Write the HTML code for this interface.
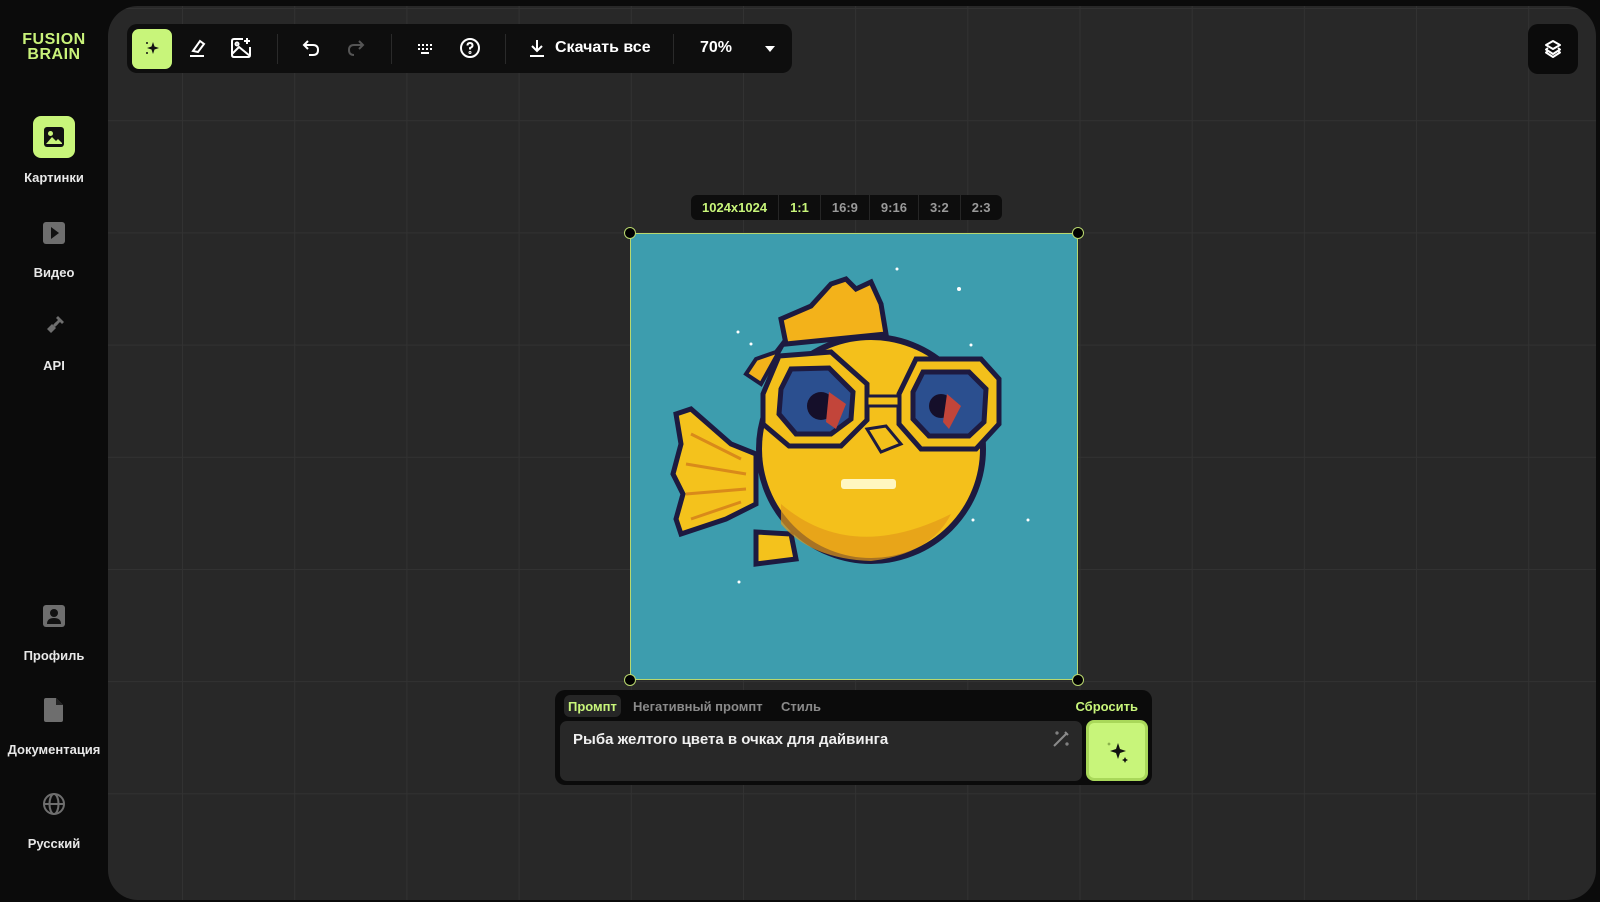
<!DOCTYPE html>
<html><head><meta charset="utf-8"><style>
*{margin:0;padding:0;box-sizing:border-box}
body{width:1600px;height:902px;background:#0b0b0b;overflow:hidden;position:relative;font-family:"Liberation Sans","DejaVu Sans",sans-serif;color:#fff}
.abs{position:absolute}
#panel{left:108px;top:6px;width:1488px;height:894px;border-radius:30px;background-color:#282828;
background-image:linear-gradient(to right,#323232 1px,transparent 1px),linear-gradient(to bottom,#323232 1px,transparent 1px);
background-size:112.2px 112.2px;background-position:74px 2px;overflow:hidden}
.logo{left:0;width:108px;top:32px;text-align:center;color:#c9f27a;font-weight:bold;font-size:16px;line-height:15px;letter-spacing:.5px}
.nav{left:0;width:108px;text-align:center;font-size:13px;font-weight:bold;color:#e8e8e8}
.tb{left:127px;top:24px;width:665px;height:49px;background:#0e0e0e;border-radius:10px}
.sep{position:absolute;top:10px;width:1px;height:30px;background:#2a2a2a}
.ic{position:absolute;top:12px}
.badge{left:691px;top:195px;height:25px;background:#0d0d0d;border-radius:6px;display:flex;font-size:13px;font-weight:bold;color:#9a9a9a}
.badge span{padding:0 11px;line-height:25px;border-left:1px solid #262626}
.badge span:first-child{border:none}
.h{width:12px;height:12px;border-radius:50%;background:#000;border:1.5px solid #b9d86e;position:absolute}
</style></head><body>
<div class="abs logo">FUSION<br>BRAIN</div>

<div class="abs" style="left:33px;top:116px;width:42px;height:42px;background:#c8f57a;border-radius:8px"></div>
<svg class="abs" style="left:42px;top:125px" width="24" height="24" viewBox="0 0 24 24"><rect x="2" y="2" width="20" height="20" rx="3" fill="#111"/><circle cx="8.5" cy="8.5" r="2.5" fill="#c8f57a"/><path d="M4 19 L10 12 L14 16 L16 14 L20 18 V19Z" fill="#c8f57a"/></svg>
<div class="abs nav" style="top:170px">Картинки</div>
<svg class="abs" style="left:42px;top:221px" width="24" height="24" viewBox="0 0 24 24"><rect x="1" y="1" width="22" height="22" rx="3" fill="#6e6e6e"/><path d="M9 6 L17 12 L9 18Z" fill="#111"/></svg>
<div class="abs nav" style="top:265px">Видео</div>
<svg class="abs" style="left:41px;top:313px" width="26" height="26" viewBox="0 0 26 26" fill="#6e6e6e"><path d="M3 23 L8 18 L6 16 L11 11 L15 15 L10 20 L8 18Z"/><path d="M13 11 L17 7 L15 5 L17 3 L23 9 L21 11 L19 9 L15 13Z"/><path d="M12 12 L15 9 L17 11 L14 14Z"/></svg>
<div class="abs nav" style="top:358px">API</div>

<svg class="abs" style="left:42px;top:604px" width="24" height="24" viewBox="0 0 24 24"><rect x="1" y="1" width="22" height="22" rx="3" fill="#6e6e6e"/><circle cx="12" cy="9" r="4" fill="#111"/><path d="M5 20 Q5 14 12 14 Q19 14 19 20Z" fill="#111"/></svg>
<div class="abs nav" style="top:648px">Профиль</div>
<svg class="abs" style="left:43px;top:697px" width="22" height="26" viewBox="0 0 22 26"><path d="M3 1 H13 L20 8 V23 Q20 25 18 25 H3 Q1 25 1 23 V3 Q1 1 3 1Z" fill="#6e6e6e"/><path d="M13 1 V8 H20" fill="#222"/></svg>
<div class="abs nav" style="top:742px">Документация</div>
<svg class="abs" style="left:42px;top:792px" width="24" height="24" viewBox="0 0 24 24" fill="none" stroke="#6e6e6e" stroke-width="2"><circle cx="12" cy="12" r="10"/><ellipse cx="12" cy="12" rx="4.5" ry="10"/><path d="M2 12 H22"/></svg>
<div class="abs nav" style="top:836px">Русский</div>

<div id="panel" class="abs"></div>

<div class="abs tb">
  <div class="abs" style="left:5px;top:5px;width:40px;height:40px;background:#c8f57a;border-radius:7px"></div>
  <svg class="ic" style="left:13px" width="24" height="24" viewBox="0 0 24 24"><path d="M13 6 L14.5 10.5 L19 12 L14.5 13.5 L13 18 L11.5 13.5 L7 12 L11.5 10.5Z" fill="#111"/><circle cx="7" cy="7" r="1" fill="#111"/><circle cx="7" cy="17" r="1" fill="#111"/></svg>
  <svg class="ic" style="left:58px" width="24" height="24" viewBox="0 0 24 24" fill="none" stroke="#fff" stroke-width="2"><path d="M8 15 L15 5 L19 8 L13 16 Z"/><path d="M5 20 H19"/></svg>
  <svg class="ic" style="left:102px" width="24" height="24" viewBox="0 0 24 24" fill="none" stroke="#fff" stroke-width="2"><path d="M14 3 H5 Q3 3 3 5 V19 Q3 21 5 21 H19 Q21 21 21 19 V11"/><path d="M3 18 L10 11 L21 20"/><circle cx="8" cy="8" r="1.5"/><path d="M18 2 V8 M15 5 H21"/></svg>
  <div class="sep" style="left:150px"></div>
  <svg class="ic" style="left:172px" width="24" height="24" viewBox="0 0 24 24" fill="none" stroke="#fff" stroke-width="2"><path d="M9 5 L5 9 L9 13"/><path d="M5 9 H14 Q19 9 19 14 Q19 19 14 19 H10"/></svg>
  <svg class="ic" style="left:217px" width="24" height="24" viewBox="0 0 24 24" fill="none" stroke="#555" stroke-width="2"><path d="M15 5 L19 9 L15 13"/><path d="M19 9 H10 Q5 9 5 14 Q5 19 10 19"/></svg>
  <div class="sep" style="left:264px"></div>
  <svg class="ic" style="left:286px" width="24" height="24" viewBox="0 0 24 24" fill="#fff"><rect x="5" y="8" width="2" height="2"/><rect x="9" y="8" width="2" height="2"/><rect x="13" y="8" width="2" height="2"/><rect x="17" y="8" width="2" height="2"/><rect x="5" y="12" width="2" height="2"/><rect x="9" y="12" width="2" height="2"/><rect x="13" y="12" width="2" height="2"/><rect x="17" y="12" width="2" height="2"/><rect x="8" y="16" width="8" height="2"/></svg>
  <svg class="ic" style="left:331px" width="24" height="24" viewBox="0 0 24 24" fill="none" stroke="#fff" stroke-width="2"><circle cx="12" cy="12" r="9"/><path d="M9.5 9.5 Q9.5 7 12 7 Q14.5 7 14.5 9.5 Q14.5 11 12 12 V13.5"/><circle cx="12" cy="16.5" r=".5"/></svg>
  <div class="sep" style="left:378px"></div>
  <svg class="ic" style="left:399px" width="22" height="24" viewBox="0 0 22 24" fill="none" stroke="#fff" stroke-width="2"><path d="M11 4 V15 M6 10 L11 15 L16 10 M4 20 H18"/></svg>
  <div class="abs" style="left:428px;top:15px;font-size:16px;font-weight:bold">Скачать все</div>
  <div class="sep" style="left:546px"></div>
  <div class="abs" style="left:573px;top:15px;font-size:16px;font-weight:bold">70%</div>
  <div class="abs" style="left:638px;top:22px;width:0;height:0;border-left:5px solid transparent;border-right:5px solid transparent;border-top:6px solid #fff"></div>
</div>

<div class="abs" style="left:1528px;top:24px;width:50px;height:50px;background:#0b0b0b;border-radius:10px"></div>
<svg class="abs" style="left:1541px;top:37px" width="24" height="24" viewBox="0 0 24 24" fill="none" stroke="#fff" stroke-width="2" stroke-linejoin="round"><path d="M12 4 L19 8 L12 12 L5 8Z"/><path d="M7 11 L5 12.5 L12 17 L19 12.5 L17 11"/><path d="M7 15 L5 16.5 L12 21 L19 16.5 L17 15" transform="translate(0,-1)"/></svg>

<div class="abs badge"><span style="color:#c8f57a">1024x1024</span><span style="color:#c8f57a">1:1</span><span>16:9</span><span>9:16</span><span>3:2</span><span>2:3</span></div>

<div class="abs" style="left:630px;top:233px;width:448px;height:447px;background:#3d9dae;border:1px solid #b9d86e">
<svg width="446" height="445" viewBox="0 0 446 445">
 <g fill="#fff"><circle cx="266" cy="35" r="1.5"/><circle cx="328" cy="55" r="2"/><circle cx="107" cy="98" r="1.5"/><circle cx="120" cy="110" r="1.5"/><circle cx="340" cy="111" r="1.5"/><circle cx="397" cy="286" r="1.5"/><circle cx="108" cy="348" r="1.5"/><circle cx="342" cy="286" r="1.5"/></g>
 <path d="M45 180 L60 175 L100 210 L125 220 L125 270 L95 285 L50 300 L45 285 L52 260 L42 240 L50 210Z" fill="#f4c21c" stroke="#1d1a40" stroke-width="5"/>
 <path d="M60 200 L110 225 M55 230 L115 240 M55 260 L115 255 M60 285 L110 268" stroke="#d98a1a" stroke-width="3"/>
 <path d="M125 298 L160 300 L165 325 L125 330Z" fill="#f4c21c" stroke="#1d1a40" stroke-width="5"/>
 <path d="M155 110 L150 85 L180 72 L200 50 L215 45 L225 55 L240 48 L250 70 L255 100Z" fill="#f3b21a" stroke="#1d1a40" stroke-width="5"/>
 <path d="M130 150 L115 140 L125 125 L145 118 L155 105Z" fill="#f3b21a" stroke="#1d1a40" stroke-width="4"/>
 <ellipse cx="240" cy="215" rx="112" ry="112" fill="#f4c01b" stroke="#1d1a40" stroke-width="6"/>
 <path d="M150 270 Q220 330 320 280 Q300 320 240 327 Q180 325 150 290Z" fill="#e39a18" opacity=".7"/>
 <rect x="210" y="245" width="55" height="10" rx="3" fill="#fff7c0"/>
 <path d="M132 160 L148 122 L200 118 L236 150 L236 186 L210 212 L158 212 L132 190Z" fill="#f3c01b" stroke="#1d1a40" stroke-width="5"/>
 <path d="M150 155 L160 135 L198 134 L222 158 L220 185 L200 200 L165 200 L148 180Z" fill="#2b4f8f" stroke="#1d1a40" stroke-width="5"/>
 <circle cx="190" cy="172" r="14" fill="#150f2a"/><path d="M198 158 L215 170 L205 195 L195 188Z" fill="#c2453a"/>
 <path d="M268 160 L285 125 L350 125 L368 145 L368 190 L345 215 L290 215 L268 190Z" fill="#f3c01b" stroke="#1d1a40" stroke-width="5"/>
 <path d="M282 158 L292 138 L338 138 L355 155 L353 188 L338 202 L298 202 L282 185Z" fill="#2b4f8f" stroke="#1d1a40" stroke-width="5"/>
 <circle cx="310" cy="172" r="12" fill="#150f2a"/><path d="M316 160 L330 172 L318 195 L312 188Z" fill="#c2453a"/>
 <rect x="236" y="162" width="32" height="10" fill="#f3c01b" stroke="#1d1a40" stroke-width="3"/>
 <path d="M236 195 L255 192 L270 210 L250 218Z" fill="#f3c01b" stroke="#1d1a40" stroke-width="3"/>
</svg>
</div>
<div class="h" style="left:624px;top:227px"></div>
<div class="h" style="left:1072px;top:227px"></div>
<div class="h" style="left:624px;top:674px"></div>
<div class="h" style="left:1072px;top:674px"></div>

<div class="abs" style="left:555px;top:690px;width:597px;height:95px;background:#0b0b0b;border-radius:10px">
  <div class="abs" style="left:9px;top:5px;width:57px;height:22px;background:#262626;border-radius:6px"></div>
  <div class="abs" style="left:13px;top:9px;font-size:13px;font-weight:bold;color:#c8f57a">Промпт</div>
  <div class="abs" style="left:78px;top:9px;font-size:13px;font-weight:bold;color:#8a8a8a">Негативный промпт</div>
  <div class="abs" style="left:226px;top:9px;font-size:13px;font-weight:bold;color:#8a8a8a">Стиль</div>
  <div class="abs" style="right:14px;top:9px;font-size:13px;font-weight:bold;color:#c8f57a">Сбросить</div>
  <div class="abs" style="left:5px;top:31px;width:522px;height:60px;background:#282828;border-radius:7px"></div>
  <div class="abs" style="left:18px;top:41px;font-size:15px;font-weight:bold;color:#f0f0f0">Рыба желтого цвета в очках для дайвинга</div>
  <svg class="abs" style="left:496px;top:39px" width="20" height="20" viewBox="0 0 20 20" fill="none" stroke="#8a8a8a" stroke-width="2"><path d="M3 17 L15 5"/><path d="M14 3 L17 6"/><circle cx="16" cy="15" r=".6"/><circle cx="6" cy="4" r=".6"/></svg>
  <div class="abs" style="left:531px;top:30px;width:62px;height:61px;background:#c8f57a;border-radius:8px;border:3px solid #a9d85a"></div>
  <svg class="abs" style="left:550px;top:48px" width="26" height="26" viewBox="0 0 26 26"><path d="M13 5 L15 11 L21 13 L15 15 L13 21 L11 15 L5 13 L11 11Z" fill="#111"/><path d="M20 19 L21 21 L23 22 L21 23 L20 25 L19 23 L17 22 L19 21Z" fill="#111"/><path d="M4 4 L4.6 5.4 L6 6 L4.6 6.6 L4 8 L3.4 6.6 L2 6 L3.4 5.4Z" fill="#7aa040"/></svg>
</div>
</body></html>
